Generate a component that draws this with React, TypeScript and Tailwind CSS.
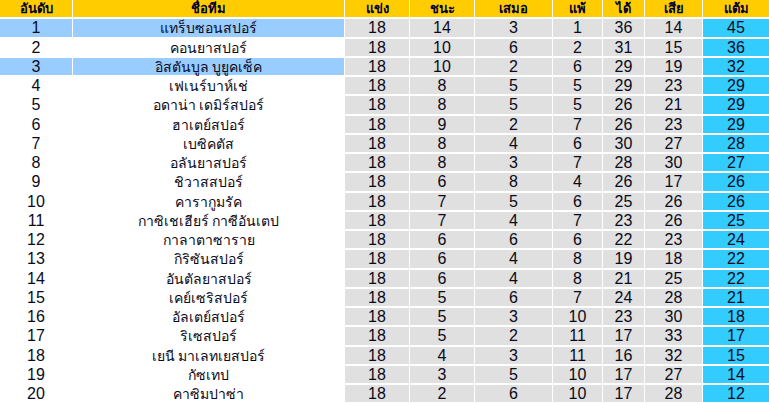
type Row = [number, string, number, number, number, number, number, number, number];

const rows: Row[] = [
  [1, "แทร็บซอนสปอร์", 18, 14, 3, 1, 36, 14, 45],
  [2, "คอนยาสปอร์", 18, 10, 6, 2, 31, 15, 36],
  [3, "อิสตันบูล บูยูคเซ็ค", 18, 10, 2, 6, 29, 19, 32],
  [4, "เฟเนร์บาห์เช่", 18, 8, 5, 5, 29, 23, 29],
  [5, "อดาน่า เดมิร์สปอร์", 18, 8, 5, 5, 26, 21, 29],
  [6, "ฮาเตย์สปอร์", 18, 9, 2, 7, 26, 23, 29],
  [7, "เบซิคตัส", 18, 8, 4, 6, 30, 27, 28],
  [8, "อลันยาสปอร์", 18, 8, 3, 7, 28, 30, 27],
  [9, "ชิวาสสปอร์", 18, 6, 8, 4, 26, 17, 26],
  [10, "คารากูมรัค", 18, 7, 5, 6, 25, 26, 26],
  [11, "กาซิเชเฮียร์ กาซีอันเตป", 18, 7, 4, 7, 23, 26, 25],
  [12, "กาลาตาซาราย", 18, 6, 6, 6, 22, 23, 24],
  [13, "กิริซันสปอร์", 18, 6, 4, 8, 19, 18, 22],
  [14, "อันตัลยาสปอร์", 18, 6, 4, 8, 21, 25, 22],
  [15, "เคย์เซริสปอร์", 18, 5, 6, 7, 24, 28, 21],
  [16, "อัลเตย์สปอร์", 18, 5, 3, 10, 23, 30, 18],
  [17, "ริเซสปอร์", 18, 5, 2, 11, 17, 33, 17],
  [18, "เยนี มาเลทเยสปอร์", 18, 4, 3, 11, 16, 32, 15],
  [19, "กัซเทป", 18, 3, 5, 10, 17, 27, 14],
  [20, "คาซิมปาซ่า", 18, 2, 6, 10, 17, 28, 12],
];

const headers = ["อันดับ", "ชื่อทีม", "แข่ง", "ชนะ", "เสมอ", "แพ้", "ได้", "เสีย", "แต้ม"];

// แถวที่ไฮไลต์สีฟ้า
const highlighted = [1, 3];

export default function App() {
  return (
    <div className="w-[769px] h-[404px] overflow-hidden bg-white font-['Liberation_Sans','Noto_Sans',sans-serif]">
      <div className="grid grid-cols-[72px_271px_64px_64px_77px_49px_41px_57px_66px] gap-x-[1px] gap-y-[2px] auto-rows-[17.25px]">
        {headers.map((h) => (
          <div
            key={h}
            className="h-[17px] bg-[#ffcc00] flex items-center justify-center text-[13px] font-bold text-[#000033] leading-none"
          >
            {h}
          </div>
        ))}
        {rows.map((r) => {
          const hi = highlighted.includes(r[0]);
          const cell = "flex items-center justify-center leading-none text-[#0a0a1a] pt-[1px]";
          const num = `${cell} text-[16px]`;
          return (
            <div key={r[0]} className="contents">
              <div className={`${num} ${hi ? "bg-[#99ccff]" : "bg-white"}`}>{r[0]}</div>
              <div className={`${cell} text-[14px] ${hi ? "bg-[#99ccff]" : "bg-white"}`}>{r[1]}</div>
              {r.slice(2, 8).map((v, i) => (
                <div key={i} className={`${num} bg-[#e0e0e0]`}>
                  {v}
                </div>
              ))}
              <div className={`${num} bg-[#33ccff]`}>{r[8]}</div>
            </div>
          );
        })}
      </div>
    </div>
  );
}
